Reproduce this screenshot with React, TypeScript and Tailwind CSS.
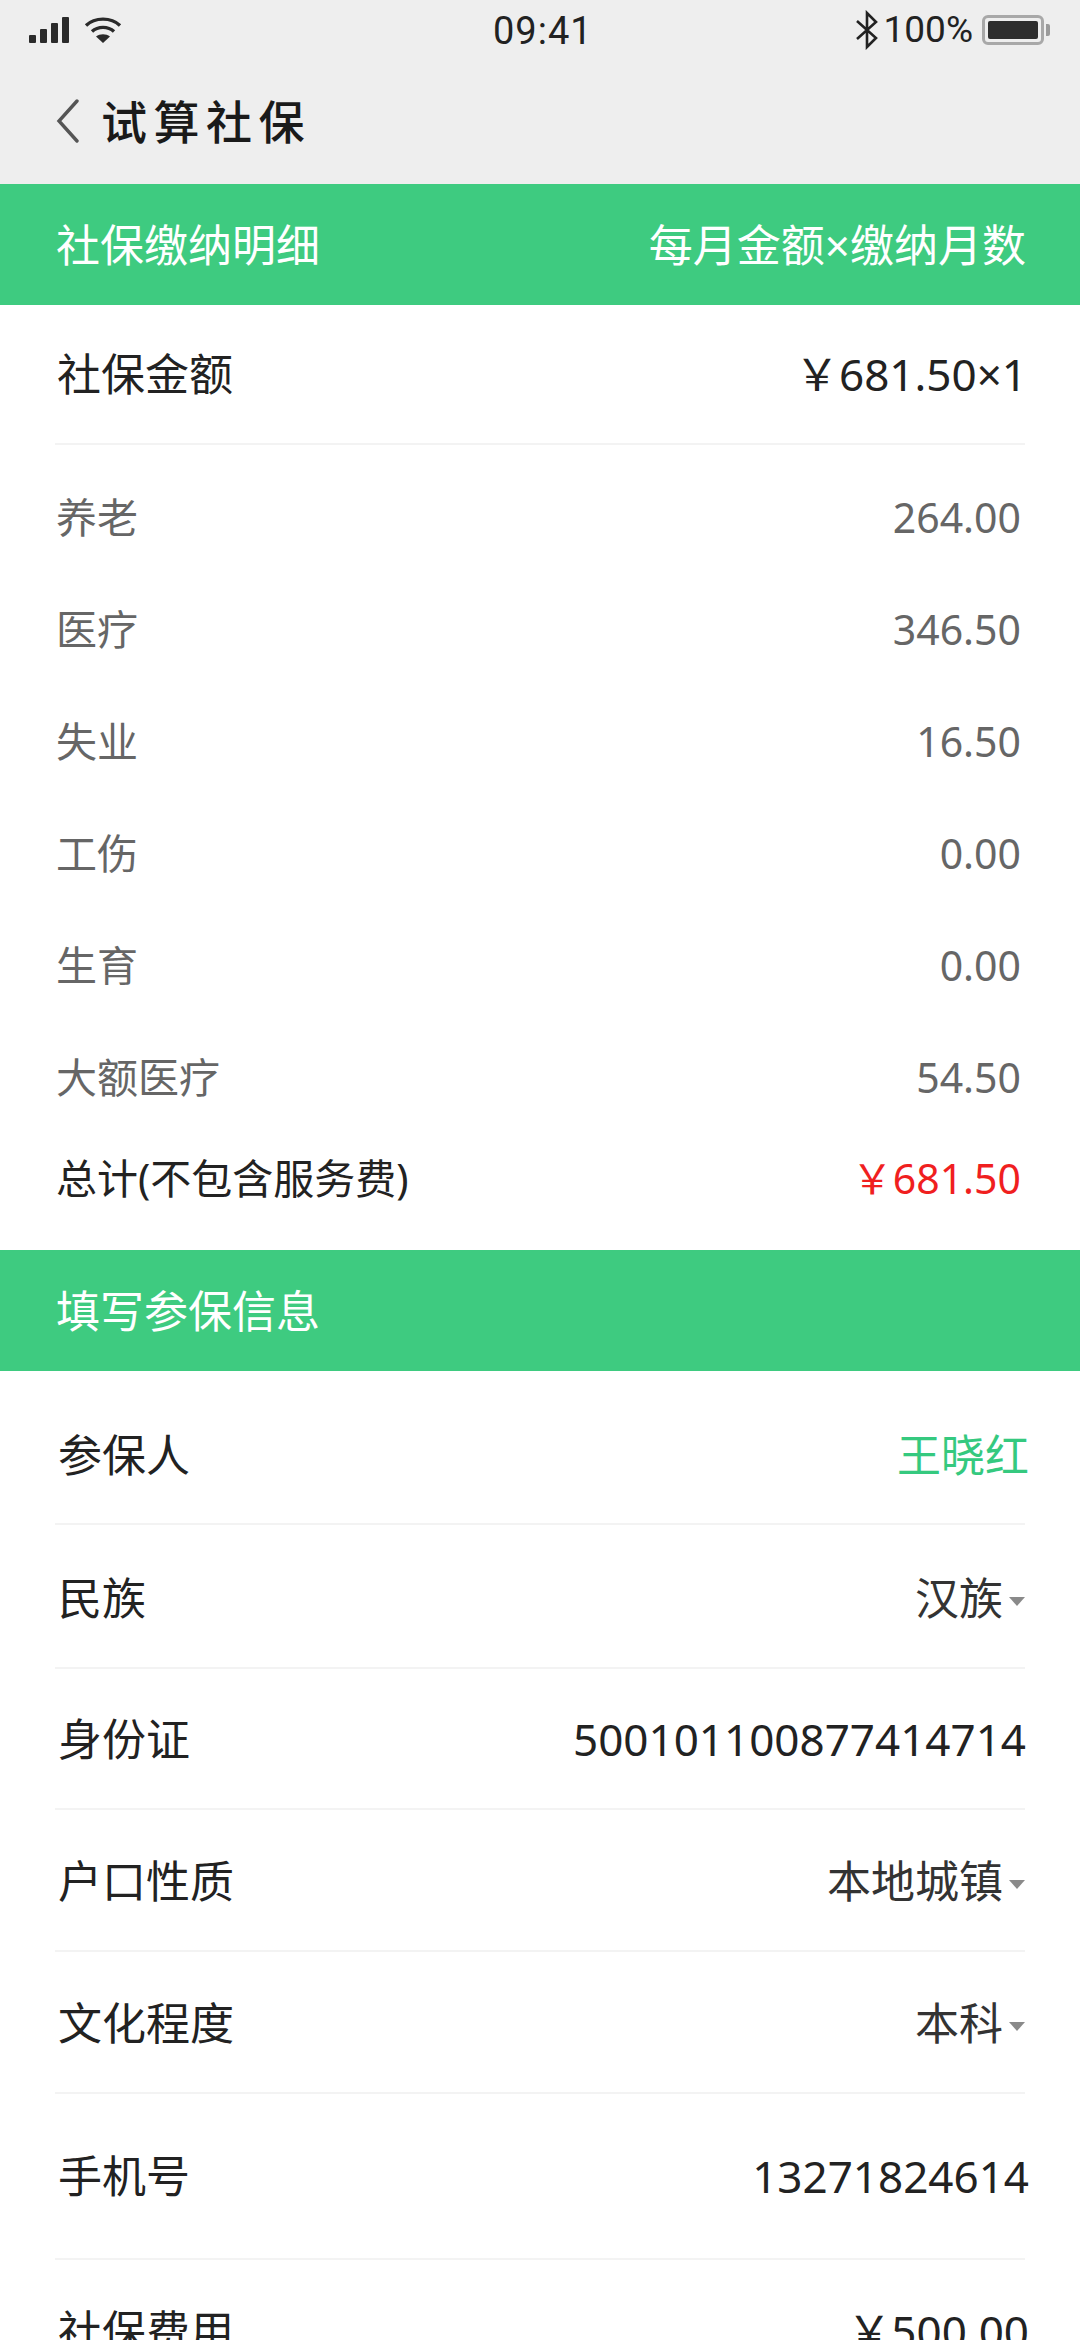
import React from 'react';

const cjk = "font-['Noto_Sans','Noto_Sans_CJK_SC',sans-serif]";

const details = [
  { label: '养老', value: '264.00' },
  { label: '医疗', value: '346.50' },
  { label: '失业', value: '16.50' },
  { label: '工伤', value: '0.00' },
  { label: '生育', value: '0.00' },
  { label: '大额医疗', value: '54.50' },
];

function Caret() {
  return (
    <svg width="16" height="9" viewBox="0 0 16 9" className="ml-[6px] mt-[6px]">
      <path d="M0 0H16L8 9Z" fill="#8a8a8a" />
    </svg>
  );
}

function StatusBar() {
  return (
    <div className="relative flex h-[60px] items-center justify-between pl-[28px] pr-[30px] text-[#222]">
      <div className="flex items-center gap-[12px]">
        <svg width="44" height="28" viewBox="0 0 44 28" fill="#2a2a2a">
          <rect x="1" y="19" width="7" height="8" rx="1" />
          <rect x="12" y="13" width="7" height="14" rx="1" />
          <rect x="23" y="7" width="7" height="20" rx="1" />
          <rect x="34" y="1" width="7" height="26" rx="1" />
        </svg>
        <svg width="38" height="28" viewBox="0 0 38 28" fill="none" stroke="#2a2a2a" strokeWidth="3.4">
          <path d="M2 9.5C11 1 27 1 36 9.5" />
          <path d="M8 15.5C14 10 24 10 30 15.5" />
          <path d="M19 27L12 20.5C16 17.5 22 17.5 26 20.5Z" fill="#2a2a2a" stroke="none" />
        </svg>
      </div>
      <span className="absolute left-[493px] top-[9px] font-['Roboto',sans-serif] text-[38px] leading-[44px] tracking-[1px]">09:41</span>
      <div className="flex items-center">
        <svg width="24" height="40" viewBox="0 0 24 40" fill="none" stroke="#222" strokeWidth="2.6">
          <path d="M2 11L21 28L12 37V3L21 12L2 29" />
        </svg>
        <span className="ml-[5px] font-['Roboto',sans-serif] text-[37px] leading-[44px]">100%</span>
        <div className="ml-[9px] flex h-[30px] w-[62px] items-center rounded-[6px] border-[3px] border-[#a8a8a8] p-[3px]">
          <div className="h-full w-full rounded-[2px] bg-[#2e2e2e]" />
        </div>
        <div className="ml-[2px] h-[12px] w-[4px] rounded-r-[2px] bg-[#9a9a9a]" />
      </div>
    </div>
  );
}

function GreenBar({ left, right }: { left: string; right?: string }) {
  return (
    <div className="flex h-[121px] items-center justify-between bg-[#3ecb80] pl-[56px] pr-[54px] text-[44px] leading-[60px] text-white">
      <span>{left}</span>
      {right && <span>{right}</span>}
    </div>
  );
}

function InfoRow({ label, children, className }: { label: string; children: React.ReactNode; className: string }) {
  return (
    <div className={`mx-[55px] flex items-center justify-between border-b-2 border-[#f3f3f3] text-[44px] leading-[60px] text-[#222] ${className}`}>
      <span className="ml-[3px]">{label}</span>
      {children}
    </div>
  );
}

export default function App() {
  return (
    <div className={`h-[2340px] w-[1080px] overflow-hidden bg-white ${cjk}`}>
      <div className="h-[184px] bg-[#eeeeee]">
        <StatusBar />
        <div className="flex h-[124px] items-center pb-[3px] pl-[56px]">
          <svg width="24" height="44" viewBox="0 0 24 44" fill="none" stroke="#555" strokeWidth="3.4" strokeLinecap="round">
            <path d="M21 2L3 22L21 42" />
          </svg>
          <span className="ml-[21px] text-[46px] font-medium leading-[60px] tracking-[6.5px] text-[#1a1a1a]">试算社保</span>
        </div>
      </div>

      <GreenBar left="社保缴纳明细" right="每月金额×缴纳月数" />

      <div className="mx-[55px] flex h-[140px] items-center justify-between border-b-2 border-[#f3f3f3] pl-[2px] text-[44px] leading-[60px] text-[#222]">
        <span>社保金额</span>
        <span className="-mr-[2px]">￥681.50×1</span>
      </div>

      <div className="mt-[16px] pl-[56px] pr-[53px]">
        {details.map((item) => (
          <div key={item.label} className="flex h-[112px] items-center justify-between pr-[6px] text-[41px] leading-[56px] text-[#666]">
            <span>{item.label}</span>
            <span>{item.value}</span>
          </div>
        ))}
        <div className="flex h-[90px] items-center justify-between pr-[6px] text-[41px] leading-[56px] text-[#222]">
          <span>总计(不包含服务费)</span>
          <span className="text-[#f01f1f]">￥681.50</span>
        </div>
      </div>
      <div className="h-[27px]" />

      <GreenBar left="填写参保信息" />

      <InfoRow label="参保人" className="h-[154px] pt-[16px]">
        <span className="-mr-[4px] text-[#35c97f]">王晓红</span>
      </InfoRow>
      <InfoRow label="民族" className="h-[144px] pt-[4px]">
        <span className="flex items-center text-[#333]">汉族<Caret /></span>
      </InfoRow>
      <InfoRow label="身份证" className="h-[141px]">
        <span className="-mr-[1px]">500101100877414714</span>
      </InfoRow>
      <InfoRow label="户口性质" className="h-[142px] pt-[2px]">
        <span className="flex items-center text-[#333]">本地城镇<Caret /></span>
      </InfoRow>
      <InfoRow label="文化程度" className="h-[142px] pt-[2px]">
        <span className="flex items-center text-[#333]">本科<Caret /></span>
      </InfoRow>
      <InfoRow label="手机号" className="h-[166px]">
        <span className="-mr-[4px]">13271824614</span>
      </InfoRow>
      <div className="mx-[55px] flex h-[142px] items-center justify-between text-[44px] leading-[60px] text-[#222]">
        <span className="ml-[3px]">社保费用</span>
        <span className="-mr-[4px]">￥500.00</span>
      </div>
    </div>
  );
}
